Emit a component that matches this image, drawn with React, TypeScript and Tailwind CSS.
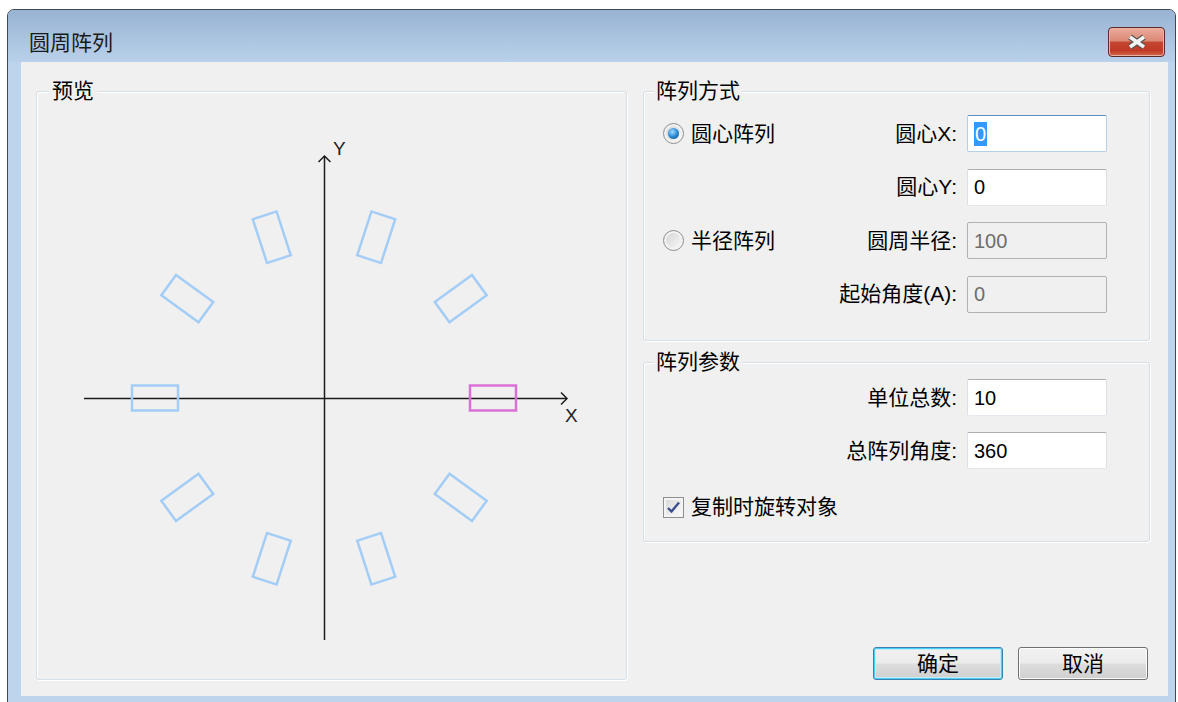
import React from 'react'

/**
 * Win7 style group box (fieldset + legend)
 */
function GroupBox({
  title,
  legendClass,
  className,
  children,
}: {
  title: string
  legendClass: string
  className: string
  children: React.ReactNode
}) {
  return (
    <fieldset
      className={`rounded-[3px] border border-[#d5dfe5] shadow-[inset_1px_1px_0_#ffffff,1px_1px_0_#ffffff] ${className}`}
    >
      <legend className={`bg-[#f0f0f0] leading-[24px] ${legendClass}`}>{title}</legend>
      {children}
    </fieldset>
  )
}

function Radio({ label, checked }: { label: string; checked?: boolean }) {
  return (
    <div className="flex h-[37px] items-center gap-[7px]">
      <span className="flex h-[21px] w-[21px] items-center justify-center rounded-full border border-[#8f8f8f] bg-[linear-gradient(135deg,#d2d2d2,#fbfbfb)] shadow-[inset_0_0_0_2px_#f3f3f3]">
        {checked && (
          <span className="h-[11px] w-[11px] rounded-full bg-[radial-gradient(circle_at_40%_35%,#a6dcff_0%,#2a8ad2_50%,#0c4c86_100%)]" />
        )}
      </span>
      <span>{label}</span>
    </div>
  )
}

function Field({
  label,
  value,
  focused,
  disabled,
}: {
  label: string
  value: string
  focused?: boolean
  disabled?: boolean
}) {
  let box = 'border border-[#abadb3] border-x-[#dbdfe6] border-b-[#e3e9ef] bg-white text-black'
  if (focused) box = 'border border-[#b5cfe7] border-t-[#5a8fc0] bg-white text-black'
  if (disabled) box = 'border border-[#adb2b5] bg-[#f0f0f0] text-[#6d6d6d]'

  return (
    <div className="flex h-[37px] items-center justify-end gap-[10px]">
      <span>{label}</span>
      <div className={`flex h-[37px] w-[140px] items-center rounded-[2px] pl-[6px] text-[20px] ${box}`}>
        {focused ? (
          <span className="bg-[#3399ff] px-[1px] leading-[24px] text-white">{value}</span>
        ) : (
          <span>{value}</span>
        )}
      </div>
    </div>
  )
}

function Checkbox({ label }: { label: string }) {
  return (
    <div className="mt-[10px] flex h-[24px] items-center gap-[7px]">
      <span className="flex h-[21px] w-[21px] items-center justify-center border border-[#8e8f8f] bg-[linear-gradient(135deg,#d6d6d6,#fdfdfd)] shadow-[inset_0_0_0_2px_#f4f4f4]">
        <svg width="15" height="15" viewBox="0 0 15 15">
          <path d="M2 8 L5.5 11.5 L13 2.5" fill="none" stroke="#3a4f8c" strokeWidth="2.4" />
        </svg>
      </span>
      <span>{label}</span>
    </div>
  )
}

function Button({ children, primary }: { children: React.ReactNode; primary?: boolean }) {
  return (
    <button
      className={`flex h-[33px] w-[130px] items-center justify-center rounded-[3px] border bg-[linear-gradient(180deg,#f2f2f2_0%,#ebebeb_48%,#dddddd_52%,#cfcfcf_100%)] ${
        primary
          ? 'border-[#3c7fb1] shadow-[inset_0_0_0_1px_#48d1f8,inset_0_0_0_2px_#c4ecfb]'
          : 'border-[#707070] shadow-[inset_0_0_0_1px_#fcfcfc]'
      }`}
    >
      {children}
    </button>
  )
}

/**
 * Preview drawing, viewBox uses page coordinates
 */
function Preview() {
  const rects = Array.from({ length: 10 }, (_, i) => {
    const a = (i * 36 * Math.PI) / 180
    return {
      cx: 324 + 169 * Math.cos(a),
      cy: 398 - 169 * Math.sin(a),
      deg: -i * 36,
      pink: i === 0,
    }
  })

  return (
    <svg width="589" height="576" viewBox="37 103 589 576" className="block">
      <g stroke="#1c1c1c" strokeWidth="1.5" fill="none">
        <line x1="84" y1="398.5" x2="567" y2="398.5" />
        <polyline points="561,392.5 567,398.5 561,404.5" />
        <line x1="324.5" y1="640" x2="324.5" y2="156" />
        <polyline points="318.5,162 324.5,156 330.5,162" />
      </g>
      <text x="565" y="422" fontSize="19" fill="#222" fontFamily="Liberation Sans, sans-serif">
        X
      </text>
      <text x="333" y="155" fontSize="19" fill="#222" fontFamily="Liberation Sans, sans-serif">
        Y
      </text>
      {rects.map((r, i) => (
        <rect
          key={i}
          x={-23}
          y={-12.5}
          width={46}
          height={25}
          fill="none"
          stroke={r.pink ? '#da70d6' : '#a3cdf7'}
          strokeWidth="2.5"
          transform={`translate(${r.cx} ${r.cy}) rotate(${r.deg})`}
        />
      ))}
    </svg>
  )
}

export default function App() {
  return (
    <div className="h-[702px] w-[1178px] overflow-hidden bg-white pl-[7px] pt-[9px] font-['Liberation_Sans','Noto_Sans_CJK_SC',sans-serif] text-[21px] leading-[24px] text-black">
      <div className="flex h-[710px] w-[1169px] flex-col rounded-t-[7px] border border-[#3f4750] bg-[#bcd4ec]">
        {/* title bar */}
        <div className="flex h-[52px] shrink-0 items-start justify-between rounded-t-[6px] bg-[linear-gradient(180deg,#98b3d3_0%,#b9d1ea_100%)] pl-[21px] pr-[10px]">
          <div className="pt-[21px] text-[#1a1a1a]">圆周阵列</div>
          <button className="mt-[17px] flex h-[30px] w-[57px] items-center justify-center rounded-[4px] border border-[#5a2a2a] bg-[linear-gradient(180deg,#ebab9c_0%,#dc8a76_45%,#c4452f_52%,#c03a27_80%,#d4654b_100%)] shadow-[inset_0_0_0_1px_#eab2a4]">
            <svg width="22" height="16" viewBox="0 0 22 16">
              <path d="M4 3 L18 13 M18 3 L4 13" stroke="#555" strokeWidth="6" />
              <path d="M4 3 L18 13 M18 3 L4 13" stroke="#f4f4f4" strokeWidth="3.5" />
            </svg>
          </button>
        </div>

        {/* client area */}
        <div className="ml-[13px] mr-[7px] flex h-[634px] shrink-0 gap-[16px] bg-[#f0f0f0] pb-[16px] pl-[15px] pr-[18px] pt-[17px]">
          <GroupBox title="预览" legendClass="ml-[12px] px-[3px]" className="w-[591px] overflow-hidden">
            <Preview />
          </GroupBox>

          <div className="flex w-[507px] flex-col">
            <GroupBox title="阵列方式" legendClass="ml-[10px] px-[2px]" className="h-[262px]">
              <div className="grid grid-cols-[1fr_auto] gap-y-[16.5px] pl-[19px] pr-[42px] pt-[12px]">
                <Radio label="圆心阵列" checked />
                <Field label="圆心X:" value="0" focused />
                <div />
                <Field label="圆心Y:" value="0" />
                <Radio label="半径阵列" />
                <Field label="圆周半径:" value="100" disabled />
                <div />
                <Field label="起始角度(A):" value="0" disabled />
              </div>
            </GroupBox>

            <GroupBox title="阵列参数" legendClass="ml-[10px] px-[2px]" className="mt-[9px] h-[192px]">
              <div className="flex flex-col gap-[16px] pl-[19px] pr-[42px] pt-[5px]">
                <Field label="单位总数:" value="10" />
                <Field label="总阵列角度:" value="360" />
                <Checkbox label="复制时旋转对象" />
              </div>
            </GroupBox>

            <div className="mt-auto flex justify-end gap-[15px] pr-[2px]">
              <Button primary>确定</Button>
              <Button>取消</Button>
            </div>
          </div>
        </div>
      </div>
    </div>
  )
}
